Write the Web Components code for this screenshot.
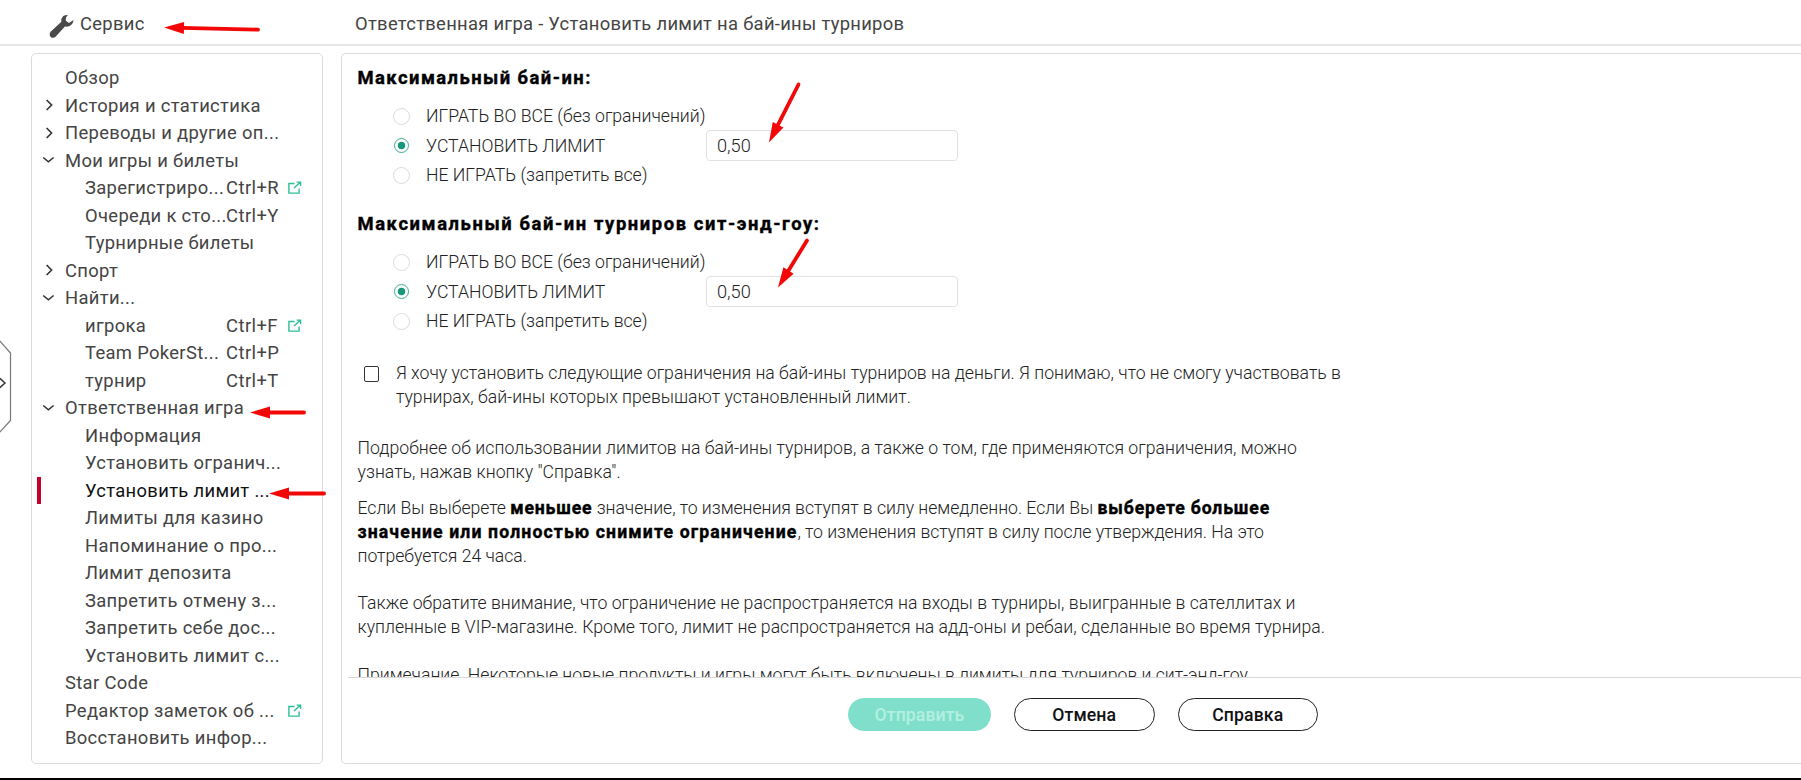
<!DOCTYPE html>
<html lang="ru">
<head>
<meta charset="utf-8">
<title>Ответственная игра</title>
<style>
  html, body { margin: 0; height: 100%; }
  body { overflow: hidden; background: #fff; font-family: Roboto, "Liberation Sans", sans-serif; }
</style>
</head>
<body>
<service-page></service-page>

<script>
class MenuItem extends HTMLElement {
  connectedCallback() {
    const arrow = this.getAttribute('arrow');
    const key = this.getAttribute('key');
    const arrows = {
      right: '<path d="M6.6 4l5 5l-5 5"/>',
      down: '<path d="M3.2 6.5l5.2 4.3L13.6 6.5"/>'
    };
    this.attachShadow({ mode: 'open' });
    this.shadowRoot.innerHTML = `
      <style>
        :host {
          display: flex;
          align-items: center;
          height: 27.5px;
          font-size: 18.4px;
          letter-spacing: 0.33px;
          color: #444;
          white-space: nowrap;
        }
        .mark { width: 4px; height: 27.5px; margin-left: 5px; }
        .arrow { width: 18px; height: 18px; margin-left: -1px; margin-right: 7px; }
        .arrow svg { display: block; fill: none; stroke: #333; stroke-width: 1.6; }
        .label { width: 161px; }
        .key { width: 62px; letter-spacing: 0.45px; }
        .ext svg { display: block; fill: none; stroke: #2dbf97; stroke-width: 1.4; }
        :host([sub]) .label { margin-left: 20px; width: 141px; }
        :host([active]) { color: #111; }
        :host([active]) .mark { background: #c4002f; }
      </style>
      <span class="mark"></span>
      <span class="arrow">${arrow ? `<svg width="18" height="18">${arrows[arrow]}</svg>` : ''}</span>
      <span class="label"><slot></slot></span>
      <span class="key">${key || ''}</span>
      ${this.hasAttribute('ext') ? `
        <span class="ext">
          <svg width="14" height="13"><path d="M6.5 2.5H.9v9.6h10.2V7.5M6 7l6-5.4M8.6 1.1h4v4"/></svg>
        </span>` : ''}
    `;
  }
}

class SideMenu extends HTMLElement {
  connectedCallback() {
    this.attachShadow({ mode: 'open' });
    this.shadowRoot.innerHTML = `
      <style>
        :host {
          display: block;
          box-sizing: border-box;
          width: 292px;
          padding-top: 10px;
          border: 1px solid #dcdcdc;
          border-radius: 5px;
        }
      </style>
      <menu-item>Обзор</menu-item>
      <menu-item arrow="right">История и статистика</menu-item>
      <menu-item arrow="right">Переводы и другие оп...</menu-item>
      <menu-item arrow="down">Мои игры и билеты</menu-item>
      <menu-item sub key="Ctrl+R" ext>Зарегистриро...</menu-item>
      <menu-item sub key="Ctrl+Y">Очереди к сто...</menu-item>
      <menu-item sub>Турнирные билеты</menu-item>
      <menu-item arrow="right">Спорт</menu-item>
      <menu-item arrow="down">Найти...</menu-item>
      <menu-item sub key="Ctrl+F" ext>игрока</menu-item>
      <menu-item sub key="Ctrl+P">Team PokerSt...</menu-item>
      <menu-item sub key="Ctrl+T">турнир</menu-item>
      <menu-item arrow="down">Ответственная игра</menu-item>
      <menu-item sub>Информация</menu-item>
      <menu-item sub>Установить огранич...</menu-item>
      <menu-item sub active>Установить лимит ...</menu-item>
      <menu-item sub>Лимиты для казино</menu-item>
      <menu-item sub>Напоминание о про...</menu-item>
      <menu-item sub>Лимит депозита</menu-item>
      <menu-item sub>Запретить отмену з...</menu-item>
      <menu-item sub>Запретить себе дос...</menu-item>
      <menu-item sub>Установить лимит с...</menu-item>
      <menu-item>Star Code</menu-item>
      <menu-item ext>Редактор заметок об ...</menu-item>
      <menu-item>Восстановить инфор...</menu-item>
    `;
  }
}

class RadioOption extends HTMLElement {
  connectedCallback() {
    this.attachShadow({ mode: 'open' });
    this.shadowRoot.innerHTML = `
      <style>
        :host {
          display: flex;
          align-items: center;
          height: 29.5px;
          font-weight: 300;
          font-size: 17.65px;
          color: #222;
          white-space: nowrap;
        }
        .dot {
          box-sizing: border-box;
          width: 17px;
          height: 17px;
          margin-right: 16px;
          border: 1px solid #dadada;
          border-radius: 50%;
        }
        :host([checked]) .dot {
          width: 15px;
          height: 15px;
          margin: 0 17px 0 1px;
          border: 1.5px solid #3fae90;
          background: radial-gradient(circle, #16987a 0 3.4px, #fff 4.2px);
        }
        .label { width: 280px; padding-top: 1.6px; }
      </style>
      <span class="dot"></span>
      <span class="label"><slot></slot></span>
      <slot name="field"></slot>
    `;
  }
}

class LimitField extends HTMLElement {
  connectedCallback() {
    this.attachShadow({ mode: 'open' });
    this.shadowRoot.innerHTML = `
      <style>
        :host {
          display: flex;
          align-items: center;
          box-sizing: border-box;
          width: 252px;
          height: 31px;
          padding-left: 10px;
          border: 1.5px solid #e2e2e2;
          border-radius: 4px;
          font-weight: 300;
          font-size: 18.2px;
        }
      </style>
      <slot></slot>
    `;
  }
}

class BuyinLimit extends HTMLElement {
  connectedCallback() {
    this.attachShadow({ mode: 'open' });
    this.shadowRoot.innerHTML = `
      <style>
        :host { display: block; height: 146px; }
        h3 {
          margin: 0 0 10.2px 15.5px;
          font-size: 18.4px;
          line-height: 26px;
          font-weight: 700;
          letter-spacing: var(--heading-spacing, 1.45px);
          -webkit-text-stroke: 0.4px #000;
          color: #000;
        }
        .options { padding-left: 51px; }
      </style>
      <h3><slot></slot></h3>
      <div class="options">
        <radio-option>ИГРАТЬ ВО ВСЕ (без ограничений)</radio-option>
        <radio-option checked>УСТАНОВИТЬ ЛИМИТ<limit-field slot="field">${this.getAttribute('value')}</limit-field></radio-option>
        <radio-option>НЕ ИГРАТЬ (запретить все)</radio-option>
      </div>
    `;
  }
}

class PillButton extends HTMLElement {
  connectedCallback() {
    this.attachShadow({ mode: 'open' });
    this.shadowRoot.innerHTML = `
      <style>
        :host {
          display: flex;
          align-items: center;
          justify-content: center;
          box-sizing: border-box;
          width: 140.5px;
          height: 33px;
          border: 1.5px solid #222;
          border-radius: 17px;
          font-size: 17.65px;
          font-weight: 500;
          letter-spacing: 0.1px;
          color: #111;
        }
        :host([disabled]) {
          width: 143px;
          border: none;
          background: #80dfca;
          color: #b5efe2;
        }
      </style>
      <slot></slot>
    `;
  }
}

class LimitPanel extends HTMLElement {
  connectedCallback() {
    this.attachShadow({ mode: 'open' });
    this.shadowRoot.innerHTML = `
      <style>
        :host {
          display: flex;
          flex-direction: column;
          flex: 1;
          box-sizing: border-box;
          border: 1px solid #dcdcdc;
          border-right: none;
          border-radius: 5px 0 0 5px;
        }
        .content {
          box-sizing: border-box;
          height: 623px;
          padding-top: 11.2px;
          overflow: hidden;
          font-weight: 300;
          font-size: 17.65px;
          line-height: 23.8px;
          color: #222;
          white-space: nowrap;
        }
        .agree { display: flex; margin: 5px 0 0 21px; }
        .box {
          box-sizing: border-box;
          width: 15px;
          height: 16px;
          margin: 3.4px 17px 0 1px;
          border: 1.5px solid #333;
          border-radius: 2px;
        }
        p { margin: 0 0 0 15.5px; letter-spacing: 0.03px; }
        .more { margin-top: 27.5px; }
        .rules { margin-top: 12.5px; letter-spacing: -0.04px; }
        .gap { margin-top: 23.6px; }
        .last { letter-spacing: 0.01px; }
        .note { letter-spacing: -0.02px; }
        b {
          font-weight: 700;
          color: #000;
          letter-spacing: 0.83px;
          -webkit-text-stroke: 0.4px #000;
        }
        b.wide { letter-spacing: 1.12px; }
        .buttons {
          display: flex;
          margin-left: 6px;
          padding: 20px 0 0 500px;
          border-top: 1px solid #d8d8d8;
          gap: 23px;
        }
      </style>
      <div class="content">
        <buyin-limit value="0,50">Максимальный бай-ин:</buyin-limit>
        <buyin-limit value="0,50" style="--heading-spacing: 1.59px">Максимальный бай-ин турниров сит-энд-гоу:</buyin-limit>
        <div class="agree">
          <span class="box"></span>
          <span>Я хочу установить следующие ограничения на бай-ины турниров на деньги. Я понимаю, что не смогу участвовать в<br>турнирах, бай-ины которых превышают установленный лимит.</span>
        </div>
        <p class="more">Подробнее об использовании лимитов на бай-ины турниров, а также о том, где применяются ограничения, можно<br>узнать, нажав кнопку "Справка".</p>
        <p class="rules">Если Вы выберете <b>меньшее</b> значение, то изменения вступят в силу немедленно. Если Вы <b>выберете большее</b><br><b class="wide">значение или полностью снимите ограничение</b>, то изменения вступят в силу после утверждения. На это<br>потребуется 24 часа.</p>
        <p class="gap">Также обратите внимание, что ограничение не распространяется на входы в турниры, выигранные в сателлитах и<br><span class="last">купленные в VIP-магазине. Кроме того, лимит не распространяется на адд-оны и ребаи, сделанные во время турнира.</span></p>
        <p class="gap note">Примечание. Некоторые новые продукты и игры могут быть включены в лимиты для турниров и сит-энд-гоу</p>
      </div>
      <div class="buttons">
        <pill-button disabled>Отправить</pill-button>
        <pill-button>Отмена</pill-button>
        <pill-button>Справка</pill-button>
      </div>
    `;
  }
}

class PageHeader extends HTMLElement {
  connectedCallback() {
    this.attachShadow({ mode: 'open' });
    this.shadowRoot.innerHTML = `
      <style>
        :host {
          display: flex;
          align-items: center;
          box-sizing: border-box;
          height: 46px;
          padding: 3px 0 0 49px;
          border-bottom: 2px solid #e6e6e6;
          font-size: 18.4px;
          color: #444;
        }
        svg { display: block; margin: 5px 6px 0 0; }
        .service { width: 275px; letter-spacing: 0.3px; }
        .title { letter-spacing: 0.29px; }
      </style>
      <svg width="25" height="25" viewBox="0 0 25 25">
        <path fill="#4a4a4a" d="M18.9 1C15 .3 11.6 3.3 12.4 7.8L1.6 17.8C.3 19.2.4 21.7 1.7 22.9C3 24.2 5.2 24.2 6.6 22.7L15.9 12.6C20.5 13.5 24.3 10.3 24.5 6.1L19.9 8.9L16.7 6.5L17.1 3.3Z"/>
      </svg>
      <span class="service">Сервис</span>
      <span class="title">Ответственная игра - Установить лимит на бай-ины турниров</span>
    `;
  }
}

// Handle of the collapsed drawer at the left window edge
class DrawerTab extends HTMLElement {
  connectedCallback() {
    this.attachShadow({ mode: 'open' });
    this.shadowRoot.innerHTML = `
      <style>
        :host { position: absolute; left: 0; top: 336px; }
        svg { display: block; fill: none; }
      </style>
      <svg width="14" height="100">
        <path d="M-1 4L10.5 17V84.5L-1 97" stroke="#777" stroke-width="1.2"/>
        <path d="M-1 41.5L5 47L-1 52.5" stroke="#333" stroke-width="1.5"/>
      </svg>
    `;
  }
}

// Red pointers drawn over the page
class RedArrows extends HTMLElement {
  connectedCallback() {
    const arrows = [
      [164, 27.5, 258, 29.6],
      [250, 412.5, 304, 412.5],
      [269, 493.5, 324, 493.5],
      [769, 142.5, 798.5, 84.5],
      [778, 287.5, 807, 240.5]
    ];
    this.attachShadow({ mode: 'open' });
    this.shadowRoot.innerHTML = `
      <style>
        :host { position: absolute; left: 0; top: 0; pointer-events: none; }
        svg { display: block; }
      </style>
      <svg width="1801" height="780">
        ${arrows.map(([x1, y1, x2, y2]) => {
          const len = Math.hypot(x2 - x1, y2 - y1);
          const angle = Math.atan2(y2 - y1, x2 - x1) * 180 / Math.PI;
          return `<g transform="translate(${x1} ${y1}) rotate(${angle})">
            <path d="M0 0L20-6V6Z" fill="#f30808"/>
            <path d="M18 0H${len}" stroke="#f30808" stroke-width="3.8" stroke-linecap="round"/>
          </g>`;
        }).join('')}
      </svg>
    `;
  }
}

class ServicePage extends HTMLElement {
  connectedCallback() {
    this.attachShadow({ mode: 'open' });
    this.shadowRoot.innerHTML = `
      <style>
        :host {
          display: flex;
          flex-direction: column;
          position: relative;
          box-sizing: border-box;
          height: 780px;
          border-bottom: 2px solid #000;
          overflow: hidden;
        }
        .columns { display: flex; gap: 18px; height: 711px; padding: 7px 0 0 31px; }
        side-menu { flex: none; }
      </style>
      <page-header></page-header>
      <div class="columns">
        <side-menu></side-menu>
        <limit-panel></limit-panel>
      </div>
      <drawer-tab></drawer-tab>
      <red-arrows></red-arrows>
    `;
  }
}

customElements.define('menu-item', MenuItem);
customElements.define('side-menu', SideMenu);
customElements.define('radio-option', RadioOption);
customElements.define('limit-field', LimitField);
customElements.define('buyin-limit', BuyinLimit);
customElements.define('pill-button', PillButton);
customElements.define('limit-panel', LimitPanel);
customElements.define('page-header', PageHeader);
customElements.define('drawer-tab', DrawerTab);
customElements.define('red-arrows', RedArrows);
customElements.define('service-page', ServicePage);
</script>
</body>
</html>
